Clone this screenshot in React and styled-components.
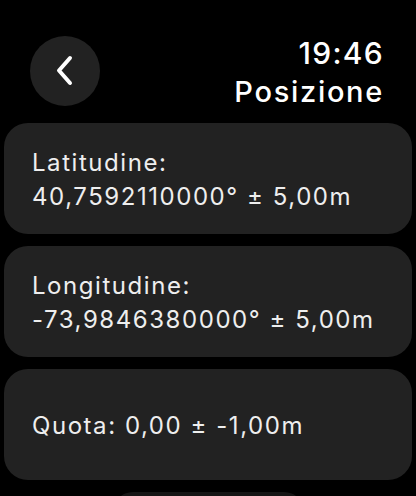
import React from "react";
import styled, { createGlobalStyle } from "styled-components";

const Global = createGlobalStyle`
  html, body { margin: 0; padding: 0; background: #000; }
  body { font-family: Inter, "Noto Sans", sans-serif; color: #fff; overflow: hidden; }
  #root { width: 416px; height: 496px; background: #000; }
`;

const Screen = styled.div`
  width: 416px;
  height: 496px;
  display: flex;
  flex-direction: column;
  overflow: hidden;
  box-sizing: border-box;
`;

const Header = styled.div`
  height: 123px;
  display: flex;
  align-items: flex-start;
  justify-content: space-between;
  padding: 36px 32px 0 30px;
  box-sizing: border-box;
  flex-shrink: 0;
`;

const BackButton = styled.button`
  width: 70px;
  height: 70px;
  border-radius: 50%;
  border: none;
  background: #222222;
  display: flex;
  align-items: center;
  justify-content: center;
  padding: 0;
`;

const TitleBlock = styled.div`
  display: flex;
  flex-direction: column;
  align-items: flex-end;
  font-weight: 500;
  color: #fff;
`;

const Time = styled.div`
  font-size: 30px;
  line-height: 34px;
  letter-spacing: 1.3px;
`;

const Title = styled.div`
  font-size: 29px;
  line-height: 34px;
  margin-top: 5px;
  letter-spacing: 1.7px;
`;

const List = styled.div`
  display: flex;
  flex-direction: column;
  gap: 12px;
  padding: 0 4px;
`;

const Card = styled.div`
  height: 111px;
  flex-shrink: 0;
  border-radius: 24px;
  background: #222222;
  display: flex;
  flex-direction: column;
  justify-content: center;
  padding: 2px 28px 0;
  box-sizing: border-box;
  font-size: 24px;
  line-height: 34px;
  color: #eeeeee;
  letter-spacing: 1.55px;
`;

const Footer = styled.div`
  margin: 12px auto 0;
  width: 191px;
  height: 40px;
  border-radius: 20px;
  background: #151515;
  flex-shrink: 0;
`;

export default function App() {
  return (
    <>
      <Global />
      <Screen>
        <Header>
          <BackButton aria-label="Indietro">
            <svg width="20" height="32" viewBox="0 0 20 32">
              <path d="M15 3 L4 15.5 L15 28" fill="none" stroke="#fff" strokeWidth="4" strokeLinecap="round" strokeLinejoin="round" />
            </svg>
          </BackButton>
          <TitleBlock>
            <Time>19:46</Time>
            <Title>Posizione</Title>
          </TitleBlock>
        </Header>
        <List>
          <Card>
            <div>Latitudine:</div>
            <div>40,7592110000° ± 5,00m</div>
          </Card>
          <Card>
            <div>Longitudine:</div>
            <div>-73,9846380000° ± 5,00m</div>
          </Card>
          <Card>
            <div>Quota: 0,00 ± -1,00m</div>
          </Card>
        </List>
        <Footer />
      </Screen>
    </>
  );
}
